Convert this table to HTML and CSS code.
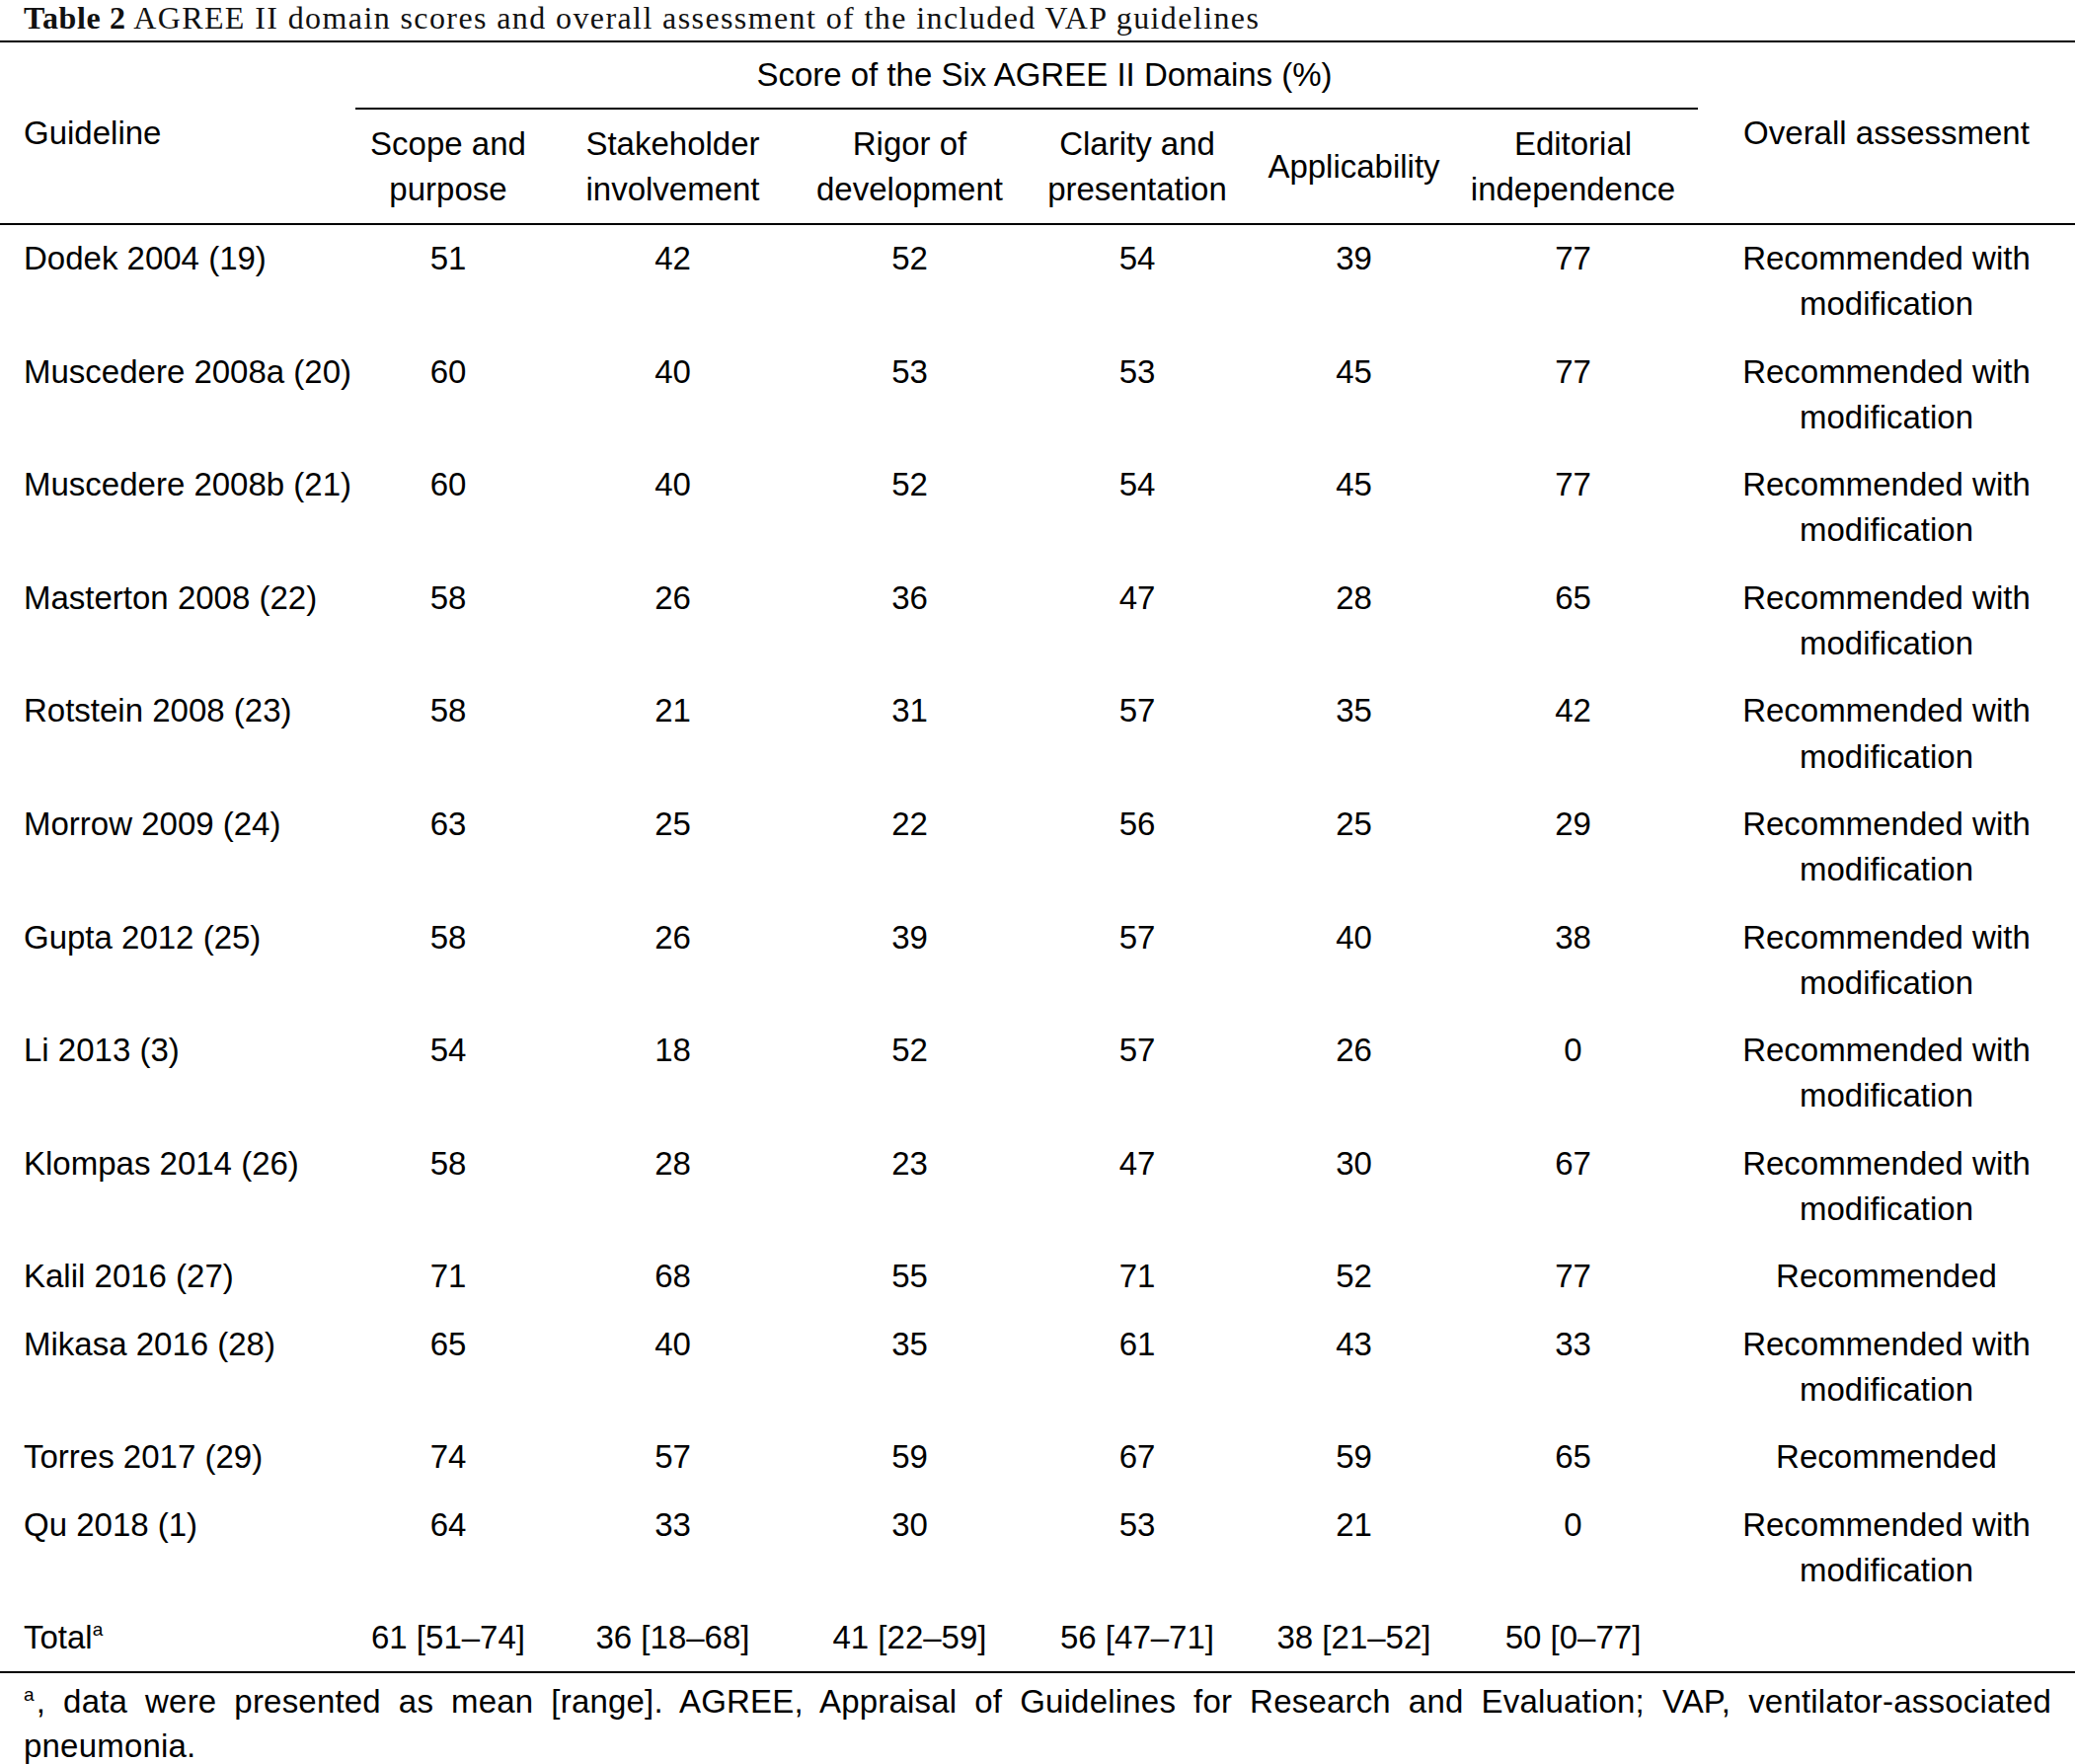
FILE: index.html
```html
<!DOCTYPE html>
<html lang="en">
<head>
<meta charset="utf-8">
<title>Table 2 AGREE II domain scores</title>
<link rel="stylesheet" href="styles.css">
</head>
<body>
<div class="caption"><b>Table 2</b> AGREE II domain scores and overall assessment of the included VAP guidelines</div>
<table class="agree">
  <colgroup>
    <col class="c-guide">
    <col class="c-scope">
    <col class="c-stake">
    <col class="c-rigor">
    <col class="c-clar">
    <col class="c-appl">
    <col class="c-edit">
    <col class="c-over">
  </colgroup>
  <thead>
    <tr>
      <th rowspan="2" class="guide-h">Guideline</th>
      <th colspan="6" class="group-h">Score of the Six AGREE II Domains (%)</th>
      <th rowspan="2" class="over-h">Overall assessment</th>
    </tr>
    <tr class="sub">
      <th>Scope and<br>purpose</th>
      <th>Stakeholder<br>involvement</th>
      <th>Rigor of<br>development</th>
      <th>Clarity and<br>presentation</th>
      <th>Applicability</th>
      <th>Editorial<br>independence</th>
    </tr>
  </thead>
  <tbody>
    <tr><td class="name">Dodek 2004 (19)</td><td>51</td><td>42</td><td>52</td><td>54</td><td>39</td><td>77</td><td>Recommended with<br>modification</td></tr>
    <tr><td class="name">Muscedere 2008a (20)</td><td>60</td><td>40</td><td>53</td><td>53</td><td>45</td><td>77</td><td>Recommended with<br>modification</td></tr>
    <tr><td class="name">Muscedere 2008b (21)</td><td>60</td><td>40</td><td>52</td><td>54</td><td>45</td><td>77</td><td>Recommended with<br>modification</td></tr>
    <tr><td class="name">Masterton 2008 (22)</td><td>58</td><td>26</td><td>36</td><td>47</td><td>28</td><td>65</td><td>Recommended with<br>modification</td></tr>
    <tr><td class="name">Rotstein 2008 (23)</td><td>58</td><td>21</td><td>31</td><td>57</td><td>35</td><td>42</td><td>Recommended with<br>modification</td></tr>
    <tr><td class="name">Morrow 2009 (24)</td><td>63</td><td>25</td><td>22</td><td>56</td><td>25</td><td>29</td><td>Recommended with<br>modification</td></tr>
    <tr><td class="name">Gupta 2012 (25)</td><td>58</td><td>26</td><td>39</td><td>57</td><td>40</td><td>38</td><td>Recommended with<br>modification</td></tr>
    <tr><td class="name">Li 2013 (3)</td><td>54</td><td>18</td><td>52</td><td>57</td><td>26</td><td>0</td><td>Recommended with<br>modification</td></tr>
    <tr><td class="name">Klompas 2014 (26)</td><td>58</td><td>28</td><td>23</td><td>47</td><td>30</td><td>67</td><td>Recommended with<br>modification</td></tr>
    <tr><td class="name">Kalil 2016 (27)</td><td>71</td><td>68</td><td>55</td><td>71</td><td>52</td><td>77</td><td>Recommended</td></tr>
    <tr><td class="name">Mikasa 2016 (28)</td><td>65</td><td>40</td><td>35</td><td>61</td><td>43</td><td>33</td><td>Recommended with<br>modification</td></tr>
    <tr><td class="name">Torres 2017 (29)</td><td>74</td><td>57</td><td>59</td><td>67</td><td>59</td><td>65</td><td>Recommended</td></tr>
    <tr><td class="name">Qu 2018 (1)</td><td>64</td><td>33</td><td>30</td><td>53</td><td>21</td><td>0</td><td>Recommended with<br>modification</td></tr>
    <tr class="total"><td class="name">Total<sup>a</sup></td><td>61 [51–74]</td><td>36 [18–68]</td><td>41 [22–59]</td><td>56 [47–71]</td><td>38 [21–52]</td><td>50 [0–77]</td><td></td></tr>
  </tbody>
</table>
<p class="note"><sup>a</sup><span>, data were presented as mean [range]. AGREE, Appraisal of Guidelines for Research and Evaluation; VAP, ventilator-associated</span> <span>pneumonia.</span></p>
</body>
</html>
```

FILE: styles.css
```css
html, body {
  margin: 0;
  padding: 0;
  background: #fff;
  color: #000;
}

body {
  width: 2102px;
  font-family: "Liberation Sans", Arial, Helvetica, sans-serif;
  font-size: 33px;
}

.caption {
  font-family: "Liberation Serif", "Times New Roman", serif;
  font-size: 32px;
  letter-spacing: 1.4px;
  line-height: 36px;
  height: 36px;
  padding-left: 24px;
  margin-bottom: 5px;
  white-space: nowrap;
  color: #111;
}

.caption b {
  font-weight: bold;
  letter-spacing: 0.6px;
}

.agree {
  width: 2102px;
  border-collapse: collapse;
  table-layout: fixed;
  border-top: 2px solid #000;
  border-bottom: 2px solid #000;
}

.c-guide { width: 360px; }
.c-scope { width: 188px; }
.c-stake { width: 267px; }
.c-rigor { width: 213px; }
.c-clar { width: 248px; }
.c-appl { width: 191px; }
.c-edit { width: 253px; }
.c-over { width: 382px; }

.agree th,
.agree td {
  font-weight: normal;
  line-height: 46.3px;
  padding: 11px 0;
  text-align: center;
  white-space: nowrap;
}

.agree thead th {
  vertical-align: middle;
  line-height: 46px;
}

.agree .group-h {
  padding: 10px 0 10px 36px;
  border-bottom: 2px solid #000;
}

.agree .guide-h {
  text-align: left;
  padding-left: 24px;
}

.agree .sub th {
  padding: 12px 0 11px;
}

.agree thead {
  border-bottom: 2px solid #000;
}

.agree td {
  vertical-align: top;
}

.agree td.name {
  text-align: left;
  padding-left: 24px;
}

sup {
  font-size: 19px;
  line-height: 0;
  vertical-align: 13px;
}

.note {
  margin: 6px 0 0;
  padding: 0 24px;
  line-height: 45px;
  text-align: justify;
  font-size: 33px;
  letter-spacing: 0.2px;
}

.note sup {
  vertical-align: 12px;
  margin-right: 2px;
}
```
